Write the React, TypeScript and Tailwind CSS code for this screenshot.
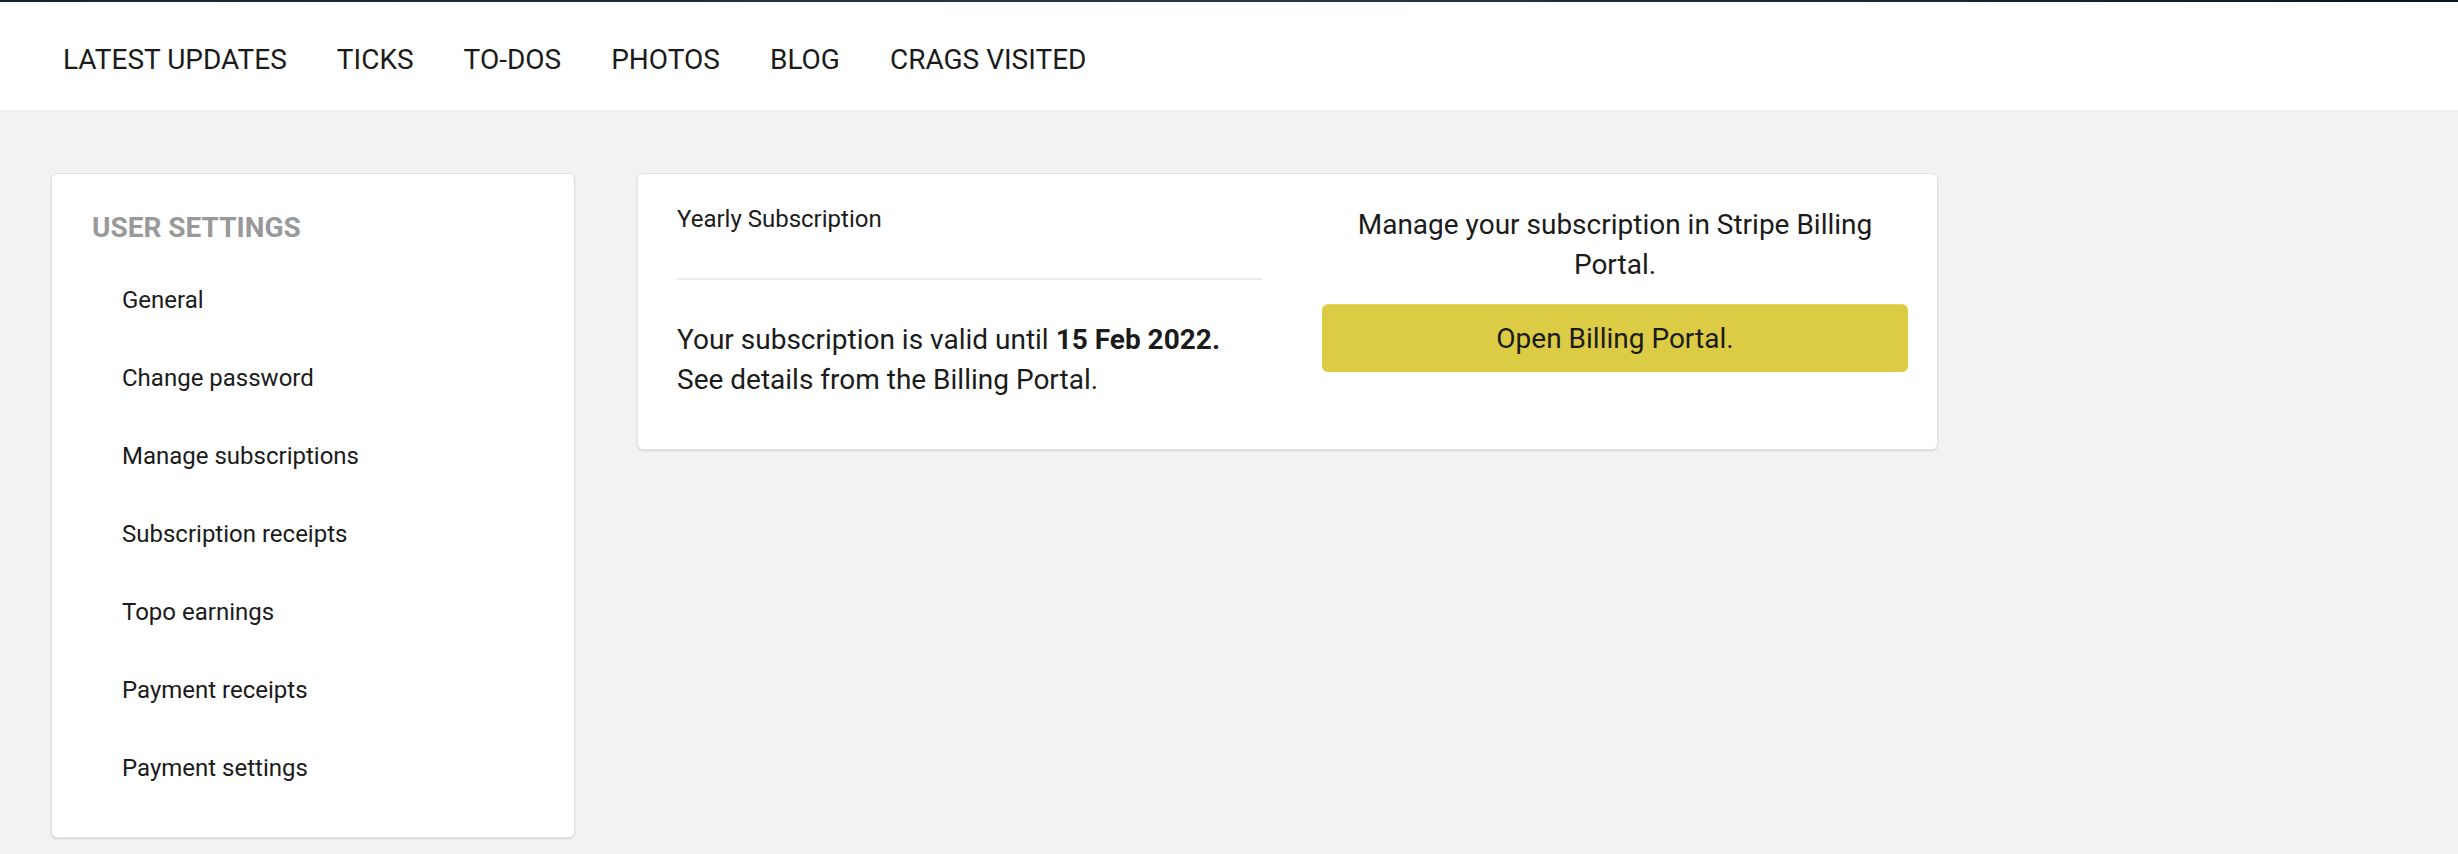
import { useState } from "react";

const navLinks = ["LATEST UPDATES", "TICKS", "TO-DOS", "PHOTOS", "BLOG", "CRAGS VISITED"];

const settingsLinks = [
  "General",
  "Change password",
  "Manage subscriptions",
  "Subscription receipts",
  "Topo earnings",
  "Payment receipts",
  "Payment settings",
];

function TopNav() {
  return (
    <div>
      {/* bottom edge of the profile cover photo */}
      <div className="h-[2px] bg-gradient-to-r from-[#16232b] via-[#2a3a44] to-[#0c171c]" />
      <nav className="flex h-[108px] items-center gap-[50px] bg-white px-[63px] pt-[8px] text-[28px] text-[#1b1b1b]">
        {navLinks.map((link) => (
          <a key={link} href="#" className="leading-none">
            {link}
          </a>
        ))}
      </nav>
    </div>
  );
}

function SettingsMenu({
  active,
  onSelect,
}: {
  active: string;
  onSelect: (name: string) => void;
}) {
  return (
    <aside className="w-[524px] shrink-0 rounded-[6px] border border-[#e1e1e4] bg-white px-[40px] pb-[30px] pt-[38px] shadow-[0_1px_2px_rgba(0,0,0,0.12)]">
      <h2 className="text-[28px] font-bold leading-[32px] text-[#999999]">USER SETTINGS</h2>
      <ul className="mt-[17px]">
        {settingsLinks.map((name) => (
          <li key={name}>
            <button
              className={
                "block py-[25px] pl-[30px] text-left text-[24px] leading-[28px] " +
                (name === active ? "text-[#1b1b1b]" : "text-[#1b1b1b]")
              }
              onClick={() => onSelect(name)}
            >
              {name}
            </button>
          </li>
        ))}
      </ul>
    </aside>
  );
}

function SubscriptionCard() {
  return (
    <section className="grid w-[1301px] grid-cols-[585px_586px] items-start gap-x-[60px] rounded-[6px] border border-[#e1e1e4] bg-white pb-[49px] pl-[39px] pr-[29px] pt-[31px] text-[#1b1b1b] shadow-[0_1px_2px_rgba(0,0,0,0.12)]">
      <div>
        <div className="text-[24px] leading-[28px]">Yearly Subscription</div>
        <div className="mt-[45px] h-[2px] bg-[#ebebeb]" />
        <p className="mt-[40px] text-[28px] leading-[40px]">
          Your subscription is valid until <strong className="font-bold">15 Feb 2022.</strong>
          <br />
          See details from the Billing Portal.
        </p>
      </div>
      <div>
        <p className="text-center text-[28px] leading-[40px]">
          Manage your subscription in Stripe Billing Portal.
        </p>
        <button className="mt-[19px] flex h-[68px] w-full items-center justify-center rounded-[6px] border-t border-[#e6d75a] bg-[#dccb45] text-[28px] text-[#1b1b1b]">
          Open Billing Portal.
        </button>
      </div>
    </section>
  );
}

export default function App() {
  const [active, setActive] = useState("Manage subscriptions");

  return (
    <div className="min-h-screen bg-[#f2f2f2] font-['Roboto',_'Liberation_Sans',_sans-serif]">
      <TopNav />
      <main className="flex items-start gap-[62px] px-[51px] pt-[63px]">
        <SettingsMenu active={active} onSelect={setActive} />
        <SubscriptionCard />
      </main>
    </div>
  );
}
